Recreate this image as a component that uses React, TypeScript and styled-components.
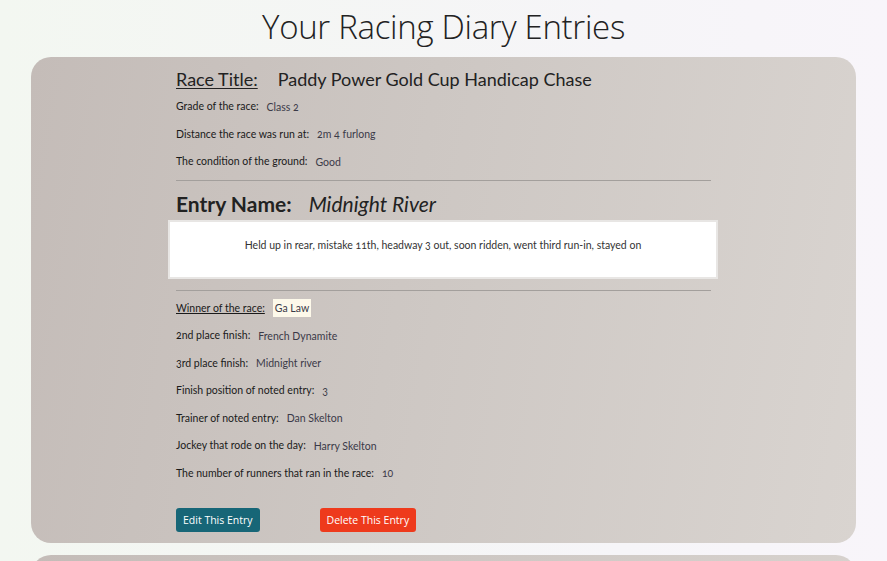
import React from "react";
import styled, { createGlobalStyle } from "styled-components";

const Global = createGlobalStyle`
  html, body { margin: 0; padding: 0; }
  body {
    background: linear-gradient(to right, #f3f7f1, #f6f5f8 70%, #f8f5fa);
    min-height: 100vh;
    font-family: "Lato", "Open Sans", sans-serif;
    color: #1f1f1f;
  }
`;

const Page = styled.div`
  display: flex;
  flex-direction: column;
  padding: 0 31px 20px;
`;

const Title = styled.h1`
  margin: 0;
  height: 57px;
  box-sizing: border-box;
  padding-bottom: 4px;
  display: flex;
  align-items: center;
  justify-content: center;
  font-family: "Open Sans", sans-serif;
  font-weight: 300;
  font-size: 33px;
  color: #222;
  letter-spacing: -0.3px;
`;

const Card = styled.section`
  border-radius: 20px;
  background: linear-gradient(100deg, #c4bcb8 0%, #cdc7c3 45%, #d9d4d0 100%);
  padding: 12px 0 11px;
  margin-bottom: 12px;
`;

const Content = styled.div`
  width: 535px;
  margin: 0 auto;
  display: flex;
  flex-direction: column;
`;

const RaceHeading = styled.h2`
  margin: 0 0 4px;
  font-size: 18px;
  line-height: 20px;
  font-weight: 400;
  color: #222;
  display: flex;
  gap: 20px;
`;

const Underlined = styled.span`
  text-decoration: underline;
  text-underline-offset: 2px;
`;

const Row = styled.div`
  font-size: 10.5px;
  line-height: 27.5px;
  color: #1a1a1a;
  display: flex;
  align-items: center;
  font-variant-numeric: oldstyle-nums;
`;

const Label = styled.span<{ $underline?: boolean }>`
  text-decoration: ${(p) => (p.$underline ? "underline" : "none")};
  margin-right: 8px;
`;

const Value = styled.span<{ $highlight?: boolean }>`
  color: #3b3a48;
  background: ${(p) => (p.$highlight ? "#fdf9ea" : "transparent")};
  padding: ${(p) => (p.$highlight ? "1px 2px" : "0")};
  line-height: 16px;
`;

const Divider = styled.hr<{ $after?: boolean }>`
  border: none;
  border-top: 1px solid #a39f9c;
  margin: ${(p) => (p.$after ? "0 0 4px" : "4px 0 0")};
  width: 100%;
`;

const EntryHeading = styled.h3`
  margin: 11px 0 4px;
  font-size: 21px;
  line-height: 24px;
  font-weight: 700;
  color: #222;
  display: flex;
  gap: 17px;
`;

const EntryName = styled.em`
  font-weight: 400;
`;

const Notes = styled.div`
  box-sizing: border-box;
  margin: 0 -7px 11px -8px;
  height: 59px;
  background: #fff;
  border: 2px solid #e8e6e4;
  text-align: center;
  font-size: 10.5px;
  line-height: 14px;
  padding-top: 16px;
  color: #333;
  font-variant-numeric: oldstyle-nums;
`;

const Actions = styled.div`
  display: flex;
  gap: 60px;
  margin-top: 21px;
`;

const Button = styled.button<{ $variant: "edit" | "delete" }>`
  height: 24px;
  padding: 0 7px;
  border: none;
  border-radius: 3px;
  background: ${(p) => (p.$variant === "edit" ? "#176677" : "#ee3a1c")};
  color: #fff;
  font-family: "Open Sans", sans-serif;
  font-size: 10.5px;
  cursor: pointer;
`;

type Entry = {
  title: string;
  grade: string;
  distance: string;
  ground: string;
  name: string;
  notes: string;
  winner: string;
  second: string;
  third: string;
  position: string;
  trainer: string;
  jockey: string;
  runners: string;
};

const entries: Entry[] = [
  {
    title: "Paddy Power Gold Cup Handicap Chase",
    grade: "Class 2",
    distance: "2m 4 furlong",
    ground: "Good",
    name: "Midnight River",
    notes:
      "Held up in rear, mistake 11th, headway 3 out, soon ridden, went third run-in, stayed on",
    winner: "Ga Law",
    second: "French Dynamite",
    third: "Midnight river",
    position: "3",
    trainer: "Dan Skelton",
    jockey: "Harry Skelton",
    runners: "10",
  },
  {
    title: "Betfair Chase",
    grade: "Grade 1",
    distance: "3m 1 furlong",
    ground: "Soft",
    name: "Royale Pagaille",
    notes: "Prominent, led 2 out, ran on well",
    winner: "Royale Pagaille",
    second: "Bravemansgame",
    third: "Protektorat",
    position: "1",
    trainer: "Venetia Williams",
    jockey: "Charlie Deutsch",
    runners: "5",
  },
];

function EntryCard({ e }: { e: Entry }) {
  return (
    <Card>
      <Content>
        <RaceHeading>
          <Underlined>Race Title:</Underlined>
          <span>{e.title}</span>
        </RaceHeading>
        <Row>
          <Label>Grade of the race:</Label>
          <Value>{e.grade}</Value>
        </Row>
        <Row>
          <Label>Distance the race was run at:</Label>
          <Value>{e.distance}</Value>
        </Row>
        <Row>
          <Label>The condition of the ground:</Label>
          <Value>{e.ground}</Value>
        </Row>
        <Divider />
        <EntryHeading>
          <span>Entry Name:</span>
          <EntryName>{e.name}</EntryName>
        </EntryHeading>
        <Notes>{e.notes}</Notes>
        <Divider $after />
        <Row>
          <Label $underline>Winner of the race:</Label>
          <Value $highlight>{e.winner}</Value>
        </Row>
        <Row>
          <Label>2nd place finish:</Label>
          <Value>{e.second}</Value>
        </Row>
        <Row>
          <Label>3rd place finish:</Label>
          <Value>{e.third}</Value>
        </Row>
        <Row>
          <Label>Finish position of noted entry:</Label>
          <Value>{e.position}</Value>
        </Row>
        <Row>
          <Label>Trainer of noted entry:</Label>
          <Value>{e.trainer}</Value>
        </Row>
        <Row>
          <Label>Jockey that rode on the day:</Label>
          <Value>{e.jockey}</Value>
        </Row>
        <Row>
          <Label>The number of runners that ran in the race:</Label>
          <Value>{e.runners}</Value>
        </Row>
        <Actions>
          <Button $variant="edit">Edit This Entry</Button>
          <Button $variant="delete">Delete This Entry</Button>
        </Actions>
      </Content>
    </Card>
  );
}

export default function App() {
  return (
    <>
      <Global />
      <Page>
        <Title>Your Racing Diary Entries</Title>
        {entries.map((e) => (
          <EntryCard key={e.title} e={e} />
        ))}
      </Page>
    </>
  );
}
